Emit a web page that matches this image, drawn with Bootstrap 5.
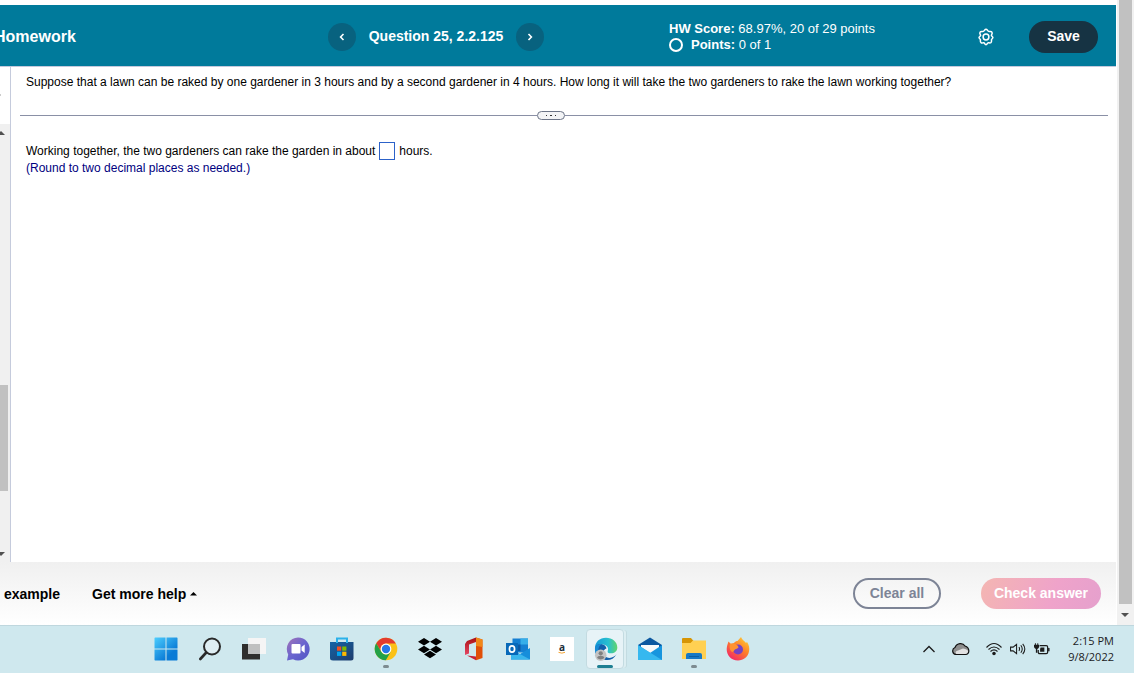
<!DOCTYPE html>
<html lang="en">
<head>
<meta charset="utf-8">
<meta name="viewport" content="width=device-width, initial-scale=1">
<title>Homework - Question 25</title>
<link href="https://cdn.jsdelivr.net/npm/bootstrap@5.3.0/dist/css/bootstrap.min.css" rel="stylesheet">
<style>
body{font-family:"Liberation Sans",Arial,sans-serif;font-size:12px;line-height:17px;color:#000;background:#fff}
button{font-family:inherit}
svg{display:block}
.app-header{height:62px;background:#007a9b;border-bottom:1px solid #c4c9dc;margin-top:5px;margin-right:1px;padding-top:2px;color:#fff;
  display:grid;grid-template-columns:328px 341px 1fr auto;align-items:center}
.app-title{font-size:16px;font-weight:700;line-height:20px;margin:1px 0 0 -6px}
.q-title{font-size:14px;line-height:18px;font-weight:700;margin:0;width:160px;padding-bottom:1px;text-align:center}
.round-btn{width:28px;height:28px;border:0;border-radius:50%;background:#08627f;padding:0;display:grid;place-items:center}
.score{font-size:13px;line-height:16px}
.ring{width:14px;height:14px;border:2px solid #fff;border-radius:50%}
.save-btn{width:69px;height:32px;border:0;border-radius:16px;background:#163343;color:#fff;font-weight:700;font-size:14px;padding:0 0 1px}
.icon-btn{border:0;background:none;padding:0}
.header-tools{margin-right:18px}
.gear-btn{margin-right:18px}
.side{width:11px;border-right:1px solid #c5cbdc}
.side-head{height:57px;padding-top:27px}
.side-head i{display:block;width:1px;height:2px;background:#ccc}
.track{background:#f0f0f0;padding:7px 0 6px}
.side-thumb{width:8px;height:106px;background:#c1c1c1}
.question{padding:7px 15px 0 15px}
.splitter{margin:20px 9px 0 9px;height:9px}
.splitter hr{margin:0;border-top:1px solid #8a90a6;opacity:1}
.grip{width:28px;height:9px;border:1px solid #6c7487;border-radius:5px;background:#f3f4f6;padding:0;display:grid;place-items:center}
.answer{padding:22px 15px 0}
.blank{width:16px;height:18px;border:1px solid #2c62c9;padding:0;margin:0 4px;font-size:12px;text-align:center;border-radius:0}
.hint{color:#000080}
.app-footer{height:63px;background:linear-gradient(#f0f0f0,#fff);margin-right:1px;padding-left:4px;padding-right:15px;font-size:14px;font-weight:700}
.app-footer button{height:31px;font-size:14px;font-weight:700;border-radius:16px;padding:0}
.app-footer a{color:#000;text-decoration:none;padding-top:1px}
.clear-btn{width:88px;border:2px solid #7d8496;background:transparent;color:#7d8496}
.check-btn{width:120px;border:0;color:#fff;background:linear-gradient(110deg,#f4b6b2,#efa3ca 60%,#e5a0cd)}
.page-bar{width:17px;background:#f1f1f1;padding-left:2px}
.page-thumb{width:13px;background:#c1c1c1}
.page-end{height:21px}
.taskbar{height:48px;background:#cfe8ee;border-top:1px solid #bfd7de;padding:0 20px 2px 144px}
.task{width:44px;height:45px;border:0;background:none;padding:0;position:relative;display:grid;place-items:center}
.running::after{content:"";position:absolute;bottom:3px;left:19px;width:6px;height:3px;border-radius:2px;background:#7d8b90}
.active-task::before{content:"";position:absolute;inset:3px 4px 2px 2px;background:#e7f3f7;border:1px solid #c3dbe1;border-radius:4px;box-shadow:3px 0 0 -1px #dceef2,4px 0 0 -1px #c3dbe1}
.active-task::after{content:"";position:absolute;bottom:3px;left:13px;width:16px;height:3px;border-radius:2px;background:#1d7f92}
.active-task svg{position:relative}
.clock{font-family:"Open Sans","Noto Sans",sans-serif;font-size:11px;line-height:16px;color:#1b1b1b;width:64px}
</style>
</head>
<body class="d-flex flex-column min-vh-100">
<div class="d-flex flex-grow-1">
  <div class="d-flex flex-column flex-grow-1 overflow-hidden">
    <header class="app-header">
      <h1 class="app-title">Homework</h1>
      <nav class="d-flex align-items-center" aria-label="Question">
        <button class="round-btn" aria-label="Previous question"><svg width="6" height="8" viewBox="0 0 6 8"><path d="M4.5 1 1.6 4l2.9 3" fill="none" stroke="#fff" stroke-width="1.6"/></svg></button>
        <h2 class="q-title text-nowrap">Question 25, 2.2.125</h2>
        <button class="round-btn" aria-label="Next question"><svg width="6" height="8" viewBox="0 0 6 8"><path d="M1.5 1l2.9 3-2.900 3" fill="none" stroke="#fff" stroke-width="1.6"/></svg></button>
      </nav>
      <div class="score">
        <div><b>HW Score:</b> 68.97%, 20 of 29 points</div>
        <div class="d-flex align-items-center gap-2"><span class="ring"></span><span><b>Points:</b> 0 of 1</span></div>
      </div>
      <div class="header-tools d-flex align-items-center">
        <button class="icon-btn gear-btn" aria-label="Settings"><svg width="18" height="18" viewBox="0 0 18 18" fill="none" stroke="#fff" stroke-width="1.500" stroke-linejoin="round"><path d="M9 1.200C10.300 1.200 10.600 3 11.600 3.400S14 2.800 14.900 4.200c1 1.500-.5 2.300-.5 3.300 0 .6 1.500 1 1.500 2s-1.200 1.300-1.400 2.200c-.2 1 .6 2-.6 2.900-1.300.9-2.100-.2-2.900.2S10.200 16.800 9 16.800s-1.300-1.700-2.100-2-1.700.7-2.900-.2c-1.200-.9-.4-1.900-.6-2.900C3.200 10.800 2 10.500 2 9.500s1.600-1.400 1.600-2C3.600 6.500 2.100 5.700 3.100 4.200c.9-1.400 2.300-.400 3.300-.8S7.700 1.200 9 1.200z"/><circle cx="9" cy="9" r="2.900"/></svg></button>
        <button class="save-btn ms-3">Save</button>
      </div>
    </header>
    <div class="d-flex flex-grow-1">
      <aside class="side d-flex flex-column">
        <div class="side-head"><i></i></div>
        <div class="track flex-grow-1 d-flex flex-column">
          <svg width="6" height="4" viewBox="0 0 6 4"><path d="M1 0 5 4H-3z" fill="#505050"/></svg>
          <div style="flex:250 0 0"></div>
          <div class="side-thumb"></div>
          <div style="flex:61 0 0"></div>
          <svg width="6" height="4" viewBox="0 0 6 4"><path d="M1 4 5 0H-3z" fill="#505050"/></svg>
        </div>
      </aside>
      <main class="flex-grow-1">
        <p class="question mb-0">Suppose that a lawn can be raked by one gardener in 3 hours and by a second gardener in 4 hours. How long it will take the two gardeners to rake the lawn working together?</p>
        <div class="splitter d-flex align-items-center">
          <hr style="flex:517 0 0">
          <button class="grip" aria-label="Resize panes"><svg width="12" height="1" viewBox="0 0 12 1"><path d="M1 0h1v1H1zM5 0h2v1H5zM10 0h1v1h-1z" fill="#333"/></svg></button>
          <hr style="flex:542 0 0">
        </div>
        <div class="answer">
          <div class="d-flex align-items-center"><label for="hours">Working together, the two gardeners can rake the garden in about</label><input class="blank" id="hours" type="text"><span>hours.</span></div>
          <div class="hint">(Round to two decimal places as needed.)</div>
        </div>
      </main>
    </div>
    <footer class="app-footer d-flex align-items-center">
      <a href="#">example</a>
      <a href="#" class="d-flex align-items-center gap-1 ms-4 ps-2">Get more help <svg width="7" height="4" viewBox="0 0 7 4"><path d="M3.500 0 7 3.500H0z"/></svg></a>
      <button class="clear-btn ms-auto me-3">Clear all</button>
      <button class="check-btn ms-4">Check answer</button>
    </footer>
  </div>
  <div class="page-bar d-flex flex-column">
    <div class="page-thumb flex-grow-1"></div>
    <div class="page-end d-flex justify-content-center align-items-center pe-1"><svg width="8" height="4" viewBox="0 0 8 4"><path d="M0 0h8L4 4z" fill="#505050"/></svg></div>
  </div>
</div>
<div class="taskbar d-flex align-items-center">
  <button class="task" aria-label="Start"><svg width="24" height="24" viewBox="0 0 24 24"><defs><linearGradient id="win" gradientUnits="userSpaceOnUse" x1="0" y1="0" x2="20" y2="22"><stop stop-color="#4fd0ff"/><stop offset=".8" stop-color="#0a7bd6"/></linearGradient></defs><path d="M1 .5H11.500V11.500H.5V1zM12.500.5H23l.5.5V11.500h-11zM.5 12.500h11v11H1L.5 23zM12.500 12.500h11V23l-.5.5H12.500z" fill="url(#win)"/></svg></button>
  <button class="task" aria-label="Search"><svg width="24" height="24" viewBox="0 0 24 24"><circle cx="14" cy="9.500" r="8" fill="#dfeef3" stroke="#292929" stroke-width="2"/><path d="m8.300 15.500-6 6.500" stroke="#292929" stroke-width="2.600" stroke-linecap="round"/></svg></button>
  <button class="task" aria-label="Task view"><svg width="24" height="24" viewBox="0 0 24 24"><path d="M0 7h18v15.500H0z" fill="#2f2e2d"/><path d="M6 1h18v16H6z" fill="#f5f5f5"/><path d="M6 7h12v10H6z" fill="#bfc0c0"/></svg></button>
  <button class="task" aria-label="Chat"><svg width="24" height="24" viewBox="0 0 24 24"><defs><linearGradient id="chat" x2="1" y2="1"><stop stop-color="#a373b7"/><stop offset=".5" stop-color="#6a65cf"/><stop offset="1" stop-color="#5054c4"/></linearGradient></defs><path d="M12 .5a11.500 11.500 0 1 1-5 21.800L1 23.500l1.200-6A11.500 11.500 0 0 1 12 .5z" fill="url(#chat)"/><rect x="5.500" y="7" width="9" height="9.500" rx="1" fill="#fff"/><path d="m15.500 10 3.200-2.500v8.500l-3.200-2.500z" fill="#fff"/></svg></button>
  <button class="task" aria-label="Microsoft Store"><svg width="24" height="24" viewBox="0 0 24 24"><defs><linearGradient id="store" x2="1" y2="1"><stop stop-color="#1464a6"/><stop offset="1" stop-color="#203c6c"/></linearGradient></defs><path d="M0 5h23.500v16q0 2.500-2.500 2.500H3Q0 23.500 0 21z" fill="url(#store)"/><path d="M7 6V1.500h10V6" fill="none" stroke="#2bb1ea" stroke-width="2"/><path d="M7 9.500h4.200v4.200H7z" fill="#f25022"/><path d="M12.200 9.500h4.200v4.200h-4.200z" fill="#7fba00"/><path d="M7 14.700h4.200v4.200H7z" fill="#00a4ef"/><path d="M12.200 14.700h4.200v4.200h-4.200z" fill="#ffb900"/></svg></button>
  <button class="task running" aria-label="Chrome"><svg width="24" height="24" viewBox="0 0 24 24"><circle cx="12" cy="12" r="11.300" fill="#fbc117"/><path d="M2.200 6.300A11.300 11.300 0 0 1 21.800 6.500H12a5.500 5.500 0 0 0-4.800 8.300z" fill="#e33b2e"/><path d="M2.200 6.300 7.200 14.800A5.500 5.500 0 0 0 16.800 14.700L11.800 23.300A11.300 11.300 0 0 1 2.200 6.300z" fill="#24a148"/><circle cx="12" cy="12" r="5.400" fill="#fff"/><circle cx="12" cy="12" r="4.200" fill="#2878e8"/></svg></button>
  <button class="task" aria-label="Dropbox"><svg width="24" height="24" viewBox="0 0 24 24"><path d="m6 1 6 3.700L6 8.500 0 4.700zM18 1l6 3.700-6 3.800-6-3.800zM6 8.700l6 3.700-6 3.800-6-3.800zM18 8.700l6 3.700-6 3.800-6-3.800zM12 13.700l6 3.700-6 3.800-6-3.800z"/></svg></button>
  <button class="task" aria-label="Office"><svg width="24" height="24" viewBox="0 0 24 24"><defs><linearGradient id="off" x2="0" y2="1"><stop stop-color="#a90f12"/><stop offset="1" stop-color="#e54865"/></linearGradient></defs><path d="M14 .5 5 4 3 7v11l4-1.500V7.500L14 5z" fill="url(#off)"/><path d="M14 .5 20.500 2.500V21L14 23.300z" fill="#e04f08"/><path d="m14 .5 6.500 2V10L14 9z" fill="#f18718"/><path d="M5 18.500 14 19.500v3.800z" fill="#c62136"/></svg></button>
  <button class="task" aria-label="Outlook"><svg width="24" height="24" viewBox="0 0 24 24"><path d="M6.500 1.500h15.500v14H6.500z" fill="#147fd2"/><path d="M14.500 1.500h7.500v6h-7.500z" fill="#35aee9"/><path d="M6.500 7.500h8V14h-8z" fill="#0c59a4"/><path d="M5 12.500 14 17l10-6v11.500H5z" fill="#168edb"/><path d="M14 17 24 22.500H5V18z" fill="#39b6ed"/><path d="M0 6h12v12H0z" fill="#0869b9"/><ellipse cx="6" cy="12" rx="2.600" ry="3.200" fill="none" stroke="#fff" stroke-width="1.700"/></svg></button>
  <button class="task" aria-label="Amazon"><svg width="24" height="24" viewBox="0 0 24 24"><path d="M0 0h24v24H0z" fill="#fff"/><text x="12" y="14" text-anchor="middle" font-size="10" font-weight="700" font-family="Open Sans,sans-serif" fill="#222e3a">a</text><path d="M8.500 15.300q3.500 1.700 6.500 0" fill="none" stroke="#f5a637"/></svg></button>
  <button class="task active-task" aria-label="Edge"><svg width="24" height="24" viewBox="0 0 25 25"><defs><linearGradient id="edge" x2="1"><stop stop-color="#159bd8"/><stop offset=".6" stop-color="#28c0cf"/><stop offset="1" stop-color="#61d56b"/></linearGradient></defs><path d="M1 12C1 5 6 .8 12.500.8S24.300 5 24.300 11c0 4-3 6-6.500 6-3 0-4-1-3.500-2.500 2-5-4.500-8-8.500-6C3 9.500 1.500 11 1 12z" fill="url(#edge)"/><path d="M1 12c1-3.500 4-5 7-4.500 3 .4 5 2.500 5 4.500-4 1-4.500 6.500 0 9 4 2 8 0 10.500-3C21 22.500 17 24.500 12.500 24 5 24 .8 18.500 1 12z" fill="#1360aa"/><path d="M1 12c1-3.500 4-5 7-4.500C3 10 4 17 7 23 2.500 20 .8 17 1 12z" fill="#168bd5"/><circle cx="7" cy="19" r="6" fill="#c3c3c3"/><circle cx="7" cy="17" r="2.200" fill="#808080"/><path d="M3.200 22q.5-2.500 3.800-2.500t3.800 2.500q-3.800 3-7.600 0z" fill="#808080"/></svg></button>
  <button class="task" aria-label="Mail"><svg width="24" height="24" viewBox="0 0 24 24"><path d="M0 8 12 .5 24 8v5H0z" fill="#0b57a0"/><path d="M3 8h18v8H3z" fill="#f7f8fa"/><path d="m0 8 12 8L24 8v15H0z" fill="#1795de"/><path d="M0 8 24 23H0z" fill="#36b8ef"/></svg></button>
  <button class="task running" aria-label="File Explorer"><svg width="24" height="24" viewBox="0 0 24 24"><path d="M0 2q0-1 1-1h8l2.500 3L9 7H0z" fill="#d79504"/><path d="M0 6h8.500L11 3.500h13V22H0z" fill="#ffd052"/><path d="M4 22v-4q0-2 2-2h12q2 0 2 2v4z" fill="#1679c6"/><path d="M7 19.500h10" stroke="#0b5ea3"/></svg></button>
  <button class="task" aria-label="Firefox"><svg width="24" height="24" viewBox="0 0 24 24"><defs><linearGradient id="fox" x1="1" x2=".3" y2="1"><stop stop-color="#ffdf3a"/><stop offset=".5" stop-color="#ff8128"/><stop offset="1" stop-color="#f32a65"/></linearGradient></defs><path d="M2.500 4.500 5 7l3-1c1-1.500 2.500-2 3.500-2L15 0c1 3 4 4 5 6l1-1c2 3 2.800 6 2 9.500C22 20 17.500 23.500 12 23.500 5 23.500.5 18 .7 12c.1-3 1-5 1.800-7.500z" fill="url(#fox)"/><circle cx="12" cy="12.500" r="5" fill="#7542c4"/><path d="M4 7c3-1 5-.5 7.500 1.500L12.500 10c-.5 2-3 1.500-4 3L7 15c-3 0-4-5-3-8z" fill="#ff9330"/></svg></button>
  <div class="ms-auto d-flex align-items-center">
    <button class="icon-btn" aria-label="Show hidden icons"><svg width="14" height="10" viewBox="0 0 14 10"><path d="m1.500 8 5.500-5.500L12.500 8" fill="none" stroke="#1b1b1b" stroke-width="1.300"/></svg></button>
    <svg class="ms-3" width="18" height="14" viewBox="0 0 18 14"><path d="M4.500 12.500C0 12.500-.5 7 3 5.500 5 .5 11 .5 13 4c5 1.500 5 8.500.5 8.500z" fill="#8e8e8e"/><path d="M4 12Q2.500 9.500 6 8.500L11 6.500q5 .5 5.500 3.500-.5 2.500-3 2.500z" fill="#e2e2e2"/><path d="M4.500 12.500C0 12.500-.5 7 3 5.500 5 .5 11 .5 13 4c5 1.500 5 8.500.5 8.500z" fill="none" stroke="#111" stroke-width="1.200"/></svg>
    <svg class="ms-3" width="16" height="14" viewBox="0 0 16 14" fill="none" stroke="#1b1b1b" stroke-width="1.100"><path d="M.5 5.500Q8-2.500 15.500 5.500M2.500 7.500q5.500-5 11 0M4.500 9.500q3.500-3.200 7 0"/><circle cx="8" cy="11.500" r="1.200" fill="#1b1b1b"/></svg>
    <svg class="ms-2" width="16" height="14" viewBox="0 0 17 14" fill="none" stroke="#1b1b1b" stroke-width="1.100"><path d="M.6 5v4h2.700L7 12V2L3.300 5zM9.500 5q1.300 2 0 4M11.500 3q3 4 0 8M13.500 1.500q4.500 5.500 0 11"/></svg>
    <svg class="ms-2" width="16" height="14" viewBox="0 0 17 14"><path d="M6 3.500h7q1.500 0 1.500 1.500v5.500q0 1.500-1.500 1.500H6q-1.500 0-1.500-1.500V8" fill="none" stroke="#1b1b1b" stroke-width="1.300"/><path d="M7 5.500h4v4.500H6.500V7zM15 6h1.500v3.500H15zM0 2.500h1V1h1v1.500h1.500V1h1v1.500h1v2Q5 6.500 3.500 7v4H2V7Q0 6 0 4.500z" fill="#1b1b1b"/></svg>
    <div class="clock text-end"><div>2:15 PM</div><div>9/8/2022</div></div>
  </div>
</div>
<script src="https://cdn.jsdelivr.net/npm/bootstrap@5.3.0/dist/js/bootstrap.bundle.min.js"></script>
</body>
</html>
